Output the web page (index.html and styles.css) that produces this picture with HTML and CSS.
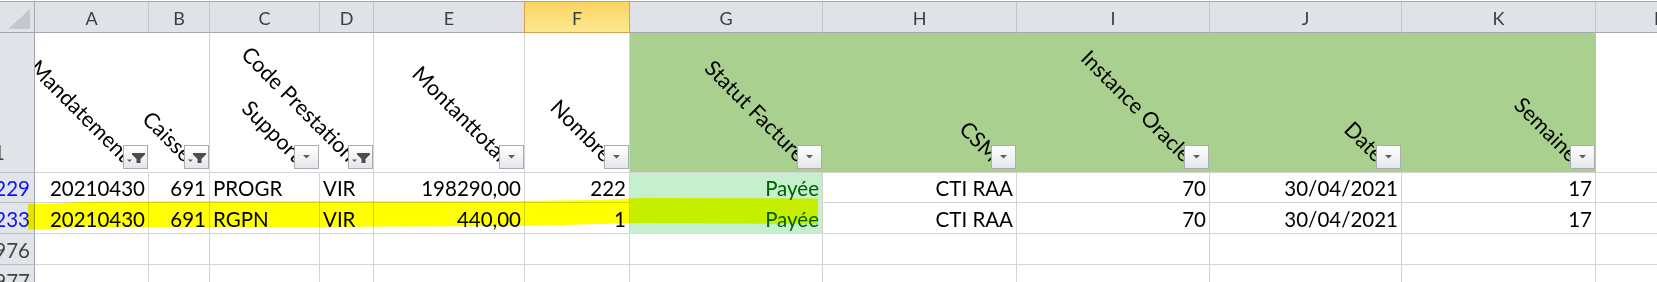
FILE: index.html
```html
<!DOCTYPE html>
<html lang="fr">
<head>
<meta charset="utf-8">
<title>Feuille</title>
<link rel="stylesheet" href="styles.css">
</head>
<body>
<div class="sheet">
  <!-- column header row -->
  <div class="corner"><span class="tri"></span></div>
  <div class="ch">A</div>
  <div class="ch">B</div>
  <div class="ch">C</div>
  <div class="ch">D</div>
  <div class="ch">E</div>
  <div class="ch sel">F</div>
  <div class="ch">G</div>
  <div class="ch">H</div>
  <div class="ch">I</div>
  <div class="ch">J</div>
  <div class="ch">K</div>
  <div class="ch last">L</div>

  <!-- row 1 : headers -->
  <div class="rh first">1</div>
  <div class="hd nogrid"><span class="lbl">Mandatement</span><span class="fb"><svg width="23" height="22" viewBox="0 0 23 22"><path class="fun" d="M8 7H21V8.5L16.5 13V17H12.5V13L8 8.5Z"/><path class="arr" d="M3 13.5H8L5.5 16Z"/></svg></span></div>
  <div class="hd"><span class="lbl">Caisse</span><span class="fb"><svg width="23" height="22" viewBox="0 0 23 22"><path class="fun" d="M8 7H21V8.5L16.5 13V17H12.5V13L8 8.5Z"/><path class="arr" d="M3 13.5H8L5.5 16Z"/></svg></span></div>
  <div class="hd nogrid"><span class="lbl">Support</span><span class="fb"><svg width="23" height="22" viewBox="0 0 23 22"><path class="arr" d="M8 9H15L11.5 12.5Z"/></svg></span></div>
  <div class="hd"><span class="lbl">Code Prestation</span><span class="fb"><svg width="23" height="22" viewBox="0 0 23 22"><path class="fun" d="M8 7H21V8.5L16.5 13V17H12.5V13L8 8.5Z"/><path class="arr" d="M3 13.5H8L5.5 16Z"/></svg></span></div>
  <div class="hd"><span class="lbl">Montanttotal</span><span class="fb"><svg width="23" height="22" viewBox="0 0 23 22"><path class="arr" d="M8 9H15L11.5 12.5Z"/></svg></span></div>
  <div class="hd"><span class="lbl">Nombre</span><span class="fb"><svg width="23" height="22" viewBox="0 0 23 22"><path class="arr" d="M8 9H15L11.5 12.5Z"/></svg></span></div>
  <div class="hd green"><span class="lbl">Statut Facture</span><span class="fb"><svg width="23" height="22" viewBox="0 0 23 22"><path class="arr" d="M8 9H15L11.5 12.5Z"/></svg></span></div>
  <div class="hd green"><span class="lbl">CSM</span><span class="fb"><svg width="23" height="22" viewBox="0 0 23 22"><path class="arr" d="M8 9H15L11.5 12.5Z"/></svg></span></div>
  <div class="hd green"><span class="lbl">Instance Oracle</span><span class="fb"><svg width="23" height="22" viewBox="0 0 23 22"><path class="arr" d="M8 9H15L11.5 12.5Z"/></svg></span></div>
  <div class="hd green"><span class="lbl">Date</span><span class="fb"><svg width="23" height="22" viewBox="0 0 23 22"><path class="arr" d="M8 9H15L11.5 12.5Z"/></svg></span></div>
  <div class="hd green"><span class="lbl">Semaine</span><span class="fb"><svg width="23" height="22" viewBox="0 0 23 22"><path class="arr" d="M8 9H15L11.5 12.5Z"/></svg></span></div>
  <div class="hd nogrid"></div>

  <!-- row 2 -->
  <div class="rh filt">229</div>
  <div class="c num">20210430</div>
  <div class="c num">691</div>
  <div class="c">PROGR</div>
  <div class="c">VIR</div>
  <div class="c num">198290,00</div>
  <div class="c num">222</div>
  <div class="c num good">Payée</div>
  <div class="c num">CTI RAA</div>
  <div class="c num">70</div>
  <div class="c num">30/04/2021</div>
  <div class="c num">17</div>
  <div class="c"></div>

  <!-- row 3 -->
  <div class="rh filt">233</div>
  <div class="c num">20210430</div>
  <div class="c num">691</div>
  <div class="c">RGPN</div>
  <div class="c">VIR</div>
  <div class="c num">440,00</div>
  <div class="c num">1</div>
  <div class="c num good">Payée</div>
  <div class="c num">CTI RAA</div>
  <div class="c num">70</div>
  <div class="c num">30/04/2021</div>
  <div class="c num">17</div>
  <div class="c"></div>

  <!-- row 4 -->
  <div class="rh">976</div>
  <div class="c"></div><div class="c"></div><div class="c"></div><div class="c"></div>
  <div class="c"></div><div class="c"></div><div class="c"></div><div class="c"></div>
  <div class="c"></div><div class="c"></div><div class="c"></div><div class="c"></div>

  <!-- row 5 -->
  <div class="rh">977</div>
  <div class="c"></div><div class="c"></div><div class="c"></div><div class="c"></div>
  <div class="c"></div><div class="c"></div><div class="c"></div><div class="c"></div>
  <div class="c"></div><div class="c"></div><div class="c"></div><div class="c"></div>

  <!-- highlighter stroke drawn over row 3 -->
  <div class="marker"></div>
</div>
</body>
</html>
```

FILE: styles.css
```css
html, body {
  margin: 0;
  padding: 0;
  background: #ffffff;
  overflow: hidden;
}

.sheet {
  position: relative;
  display: grid;
  grid-template-columns: 35px 114px 61px 110px 54px 151px 105px 193px 194px 193px 192px 194px 125px;
  grid-template-rows: 31px 140px 30px 31px 31px 31px;
  width: max-content;
  margin-top: 1px;
  border-top: 1px solid #a4a8ad;
  font-family: Lato, "Liberation Sans", sans-serif;
}

.sheet > div {
  box-sizing: border-box;
}

/* top-left select-all corner */
.corner {
  background: #dfe3e8;
  border-right: 1px solid #a3a8ae;
  border-bottom: 1px solid #a3a8ae;
  padding: 7px 0 0 8px;
  position: relative;
  z-index: 2;
}
.tri {
  display: block;
  width: 22px;
  height: 20px;
  background: linear-gradient(to bottom right, transparent 50%, #c4c8cd 50%);
}

/* column letters */
.ch {
  display: flex;
  align-items: center;
  justify-content: center;
  padding-top: 4px;
  background: #dfe3e8;
  border-right: 1px solid #c3c7cc;
  border-bottom: 1px solid #a3a8ae;
  color: #3a3e44;
  font-size: 18px;
  line-height: 1.2;
}
.ch.sel {
  background: linear-gradient(#f9d363, #fee98f);
  border-right-color: #d9a04a;
  border-bottom-color: #d9a04a;
  box-shadow: -1px 0 0 #d9a04a;
}
.ch.last {
  border-right: none;
}

/* row numbers */
.rh {
  position: relative;
  z-index: 2;
  display: flex;
  justify-content: flex-end;
  align-items: flex-end;
  padding: 0 4px 4px 0;
  background: #e1e4e8;
  border-right: 1px solid #9fa4ab;
  border-bottom: 1px solid #b7bcc2;
  color: #444444;
  font-size: 20.5px;
  line-height: 1;
  white-space: nowrap;
  overflow: hidden;
}
.rh.first {
  padding-right: 29px;
  padding-bottom: 10px;
}
.rh.filt {
  color: #1010ff;
}

/* header cells of the table (row 1) */
.hd {
  position: relative;
  display: flex;
  justify-content: flex-end;
  align-items: flex-end;
  padding-bottom: 3px;
  background: #ffffff;
  border-right: 1px solid #d4d4d4;
  border-bottom: 1px solid #d4d4d4;
}
.hd.nogrid {
  border-right-color: transparent;
}
.hd.green {
  background: #a9d08e;
  border-right-color: transparent;
}

.lbl {
  position: absolute;
  right: 28px;
  bottom: 7px;
  z-index: 1;
  transform-origin: 100% 100%;
  transform: rotate(45deg);
  font-size: 21.5px;
  line-height: 1;
  color: #000000;
  white-space: nowrap;
}

/* filter button */
.fb {
  position: relative;
  z-index: 3;
  display: block;
  width: 25px;
  height: 24px;
  box-sizing: border-box;
  border: 1px solid #a9adb2;
  background: linear-gradient(#ffffff, #e3e6ea);
}
.fb svg {
  display: block;
}
.fun {
  fill: #4e4e4e;
}
.arr {
  fill: #5c5c5c;
}

/* data cells */
.c {
  position: relative;
  z-index: 2;
  display: flex;
  justify-content: flex-start;
  align-items: flex-end;
  padding: 0 3px 4px 3px;
  background: #ffffff;
  border-right: 1px solid #d4d4d4;
  border-bottom: 1px solid #d4d4d4;
  font-size: 20.5px;
  line-height: 1;
  color: #000000;
  white-space: nowrap;
}
.c.num {
  justify-content: flex-end;
}
.c.good {
  background: #c6efce;
  color: #006100;
  border-bottom-color: transparent;
}

/* yellow highlighter stroke */
.marker {
  position: absolute;
  left: 28px;
  top: 195px;
  width: 790px;
  height: 34px;
  z-index: 5;
  background: #ffff00;
  mix-blend-mode: multiply;
  clip-path: polygon(0 7px, 27px 6.5px, 52px 5px, 142px 4px, 492px 4px, 572px 3px, 612px 1px, 790px 1.5px, 790px 27px, 612px 26px, 572px 27px, 492px 29px, 272px 30px, 49px 30px, 27px 32px, 0 32.5px);
}
```
